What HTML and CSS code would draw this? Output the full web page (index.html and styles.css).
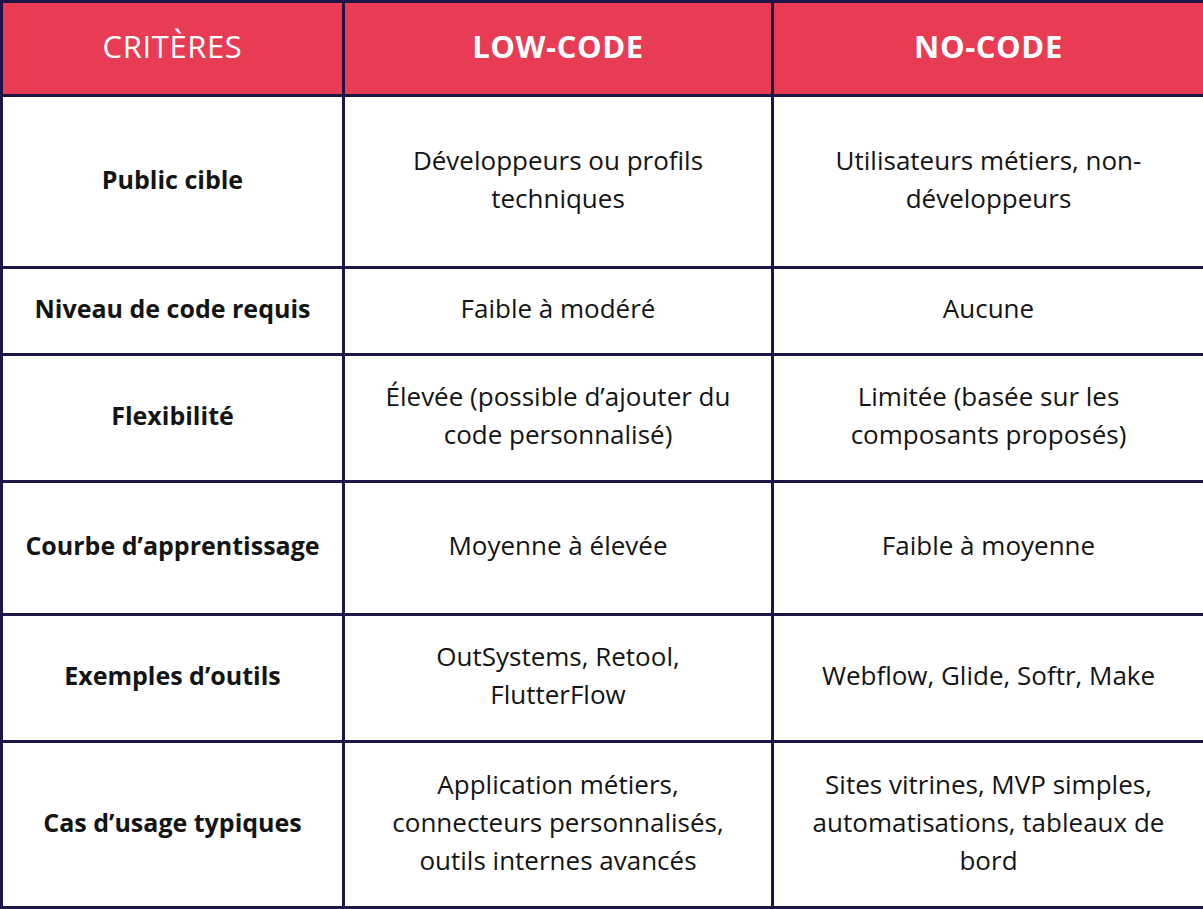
FILE: index.html
```html
<!DOCTYPE html>
<html lang="fr">
<head>
<meta charset="utf-8">
<link rel="stylesheet" href="styles.css">
</head>
<body>
<table class="cmp">
  <colgroup>
    <col class="c1"><col class="c2"><col class="c3">
  </colgroup>
  <thead>
    <tr class="r-head">
      <th class="h-light">CRITÈRES</th>
      <th>LOW-CODE</th>
      <th>NO-CODE</th>
    </tr>
  </thead>
  <tbody>
    <tr class="r1">
      <td class="crit">Public cible</td>
      <td>Développeurs ou profils<br>techniques</td>
      <td>Utilisateurs métiers, non-<br>développeurs</td>
    </tr>
    <tr class="r2">
      <td class="crit">Niveau de code requis</td>
      <td>Faible à modéré</td>
      <td>Aucune</td>
    </tr>
    <tr class="r3">
      <td class="crit">Flexibilité</td>
      <td>Élevée (possible d’ajouter du<br>code personnalisé)</td>
      <td>Limitée (basée sur les<br>composants proposés)</td>
    </tr>
    <tr class="r4">
      <td class="crit">Courbe d’apprentissage</td>
      <td>Moyenne à élevée</td>
      <td>Faible à moyenne</td>
    </tr>
    <tr class="r5">
      <td class="crit">Exemples d’outils</td>
      <td>OutSystems, Retool,<br>FlutterFlow</td>
      <td>Webflow, Glide, Softr, Make</td>
    </tr>
    <tr class="r6">
      <td class="crit">Cas d’usage typiques</td>
      <td>Application métiers,<br>connecteurs personnalisés,<br>outils internes avancés</td>
      <td>Sites vitrines, MVP simples,<br>automatisations, tableaux de<br>bord</td>
    </tr>
  </tbody>
</table>
</body>
</html>
```
FILE: styles.css
```css
html, body {
  margin: 0;
  padding: 0;
  background: #ffffff;
}
.cmp {
  border-collapse: collapse;
  width: 1203px;
  table-layout: fixed;
  font-family: "Open Sans", "Noto Sans", sans-serif;
  font-size: 26px;
  line-height: 38px;
  color: #141414;
}
.c1 { width: 342px; }
.c2 { width: 429px; }
.c3 { width: 432px; }
.cmp th, .cmp td {
  border: 3px solid #1e1646;
  text-align: center;
  vertical-align: middle;
  padding: 0 6px 6px;
}
.cmp th {
  background: #e83c54;
  color: #ffffff;
  font-weight: 700;
  font-size: 31px;
  letter-spacing: 0.6px;
}
.cmp th.h-light { font-weight: 400; }
.crit {
  font-weight: 700;
  font-size: 25px;
}
.r-head { height: 94px; }
.r1 { height: 172px; }
.r2 { height: 87px; }
.r3 { height: 127px; }
.r4 { height: 133px; }
.r5 { height: 127px; }
.r6 { height: 166px; }
```
